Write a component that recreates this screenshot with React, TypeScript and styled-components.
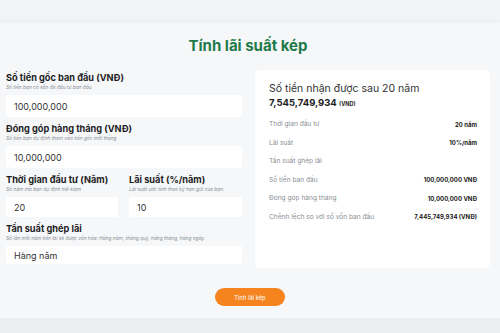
import styled, { createGlobalStyle } from 'styled-components';

const GlobalStyle = createGlobalStyle`
  html, body {
    margin: 0;
    padding: 0;
    background: #eef0f3;
    font-family: 'Inter', 'Noto Sans', sans-serif;
  }
`;

const TopBar = styled.div`
  height: 20px;
  background: #f2f3f6;
  box-shadow: 0 2px 4px rgba(0, 0, 0, 0.05);
  position: relative;
`;

const Main = styled.main`
  background: #f6f7f9;
  height: 298px;
  padding: 0 10px 0 6px;
  box-sizing: border-box;
`;

const Title = styled.h1`
  margin: 0;
  padding-top: 16px;
  height: 50px;
  box-sizing: border-box;
  text-align: center;
  font-size: 15px;
  font-weight: 700;
  color: #1e7a48;
`;

const Columns = styled.div`
  display: grid;
  grid-template-columns: 236px 235px;
  column-gap: 13px;
  align-items: start;
`;

const Form = styled.div`
  display: flex;
  flex-direction: column;
  padding-top: 2px;
`;

const Field = styled.div`
  display: flex;
  flex-direction: column;
  margin-bottom: 6px;
`;

const Label = styled.label`
  font-size: 9.2px;
  font-weight: 700;
  color: #1d1d1f;
  line-height: 12px;
`;

const Hint = styled.span`
  font-size: 4.8px;
  font-style: italic;
  color: #8a8f96;
  line-height: 7px;
  margin-bottom: 4px;
  white-space: nowrap;
`;

const Input = styled.div<{ $h?: number }>`
  height: ${(p) => p.$h ?? 22}px;
  background: #fff;
  border-radius: 2px;
  display: flex;
  align-items: center;
  padding-left: 8px;
  font-size: 9px;
  color: #333;
`;

const Row = styled.div`
  display: grid;
  grid-template-columns: 112px 113px;
  column-gap: 11px;
`;

const Card = styled.section`
  height: 198px;
  background: #fff;
  border-radius: 5px;
  padding: 12px 13px 0 14px;
  box-sizing: border-box;
`;

const CardTitle = styled.div`
  font-size: 10.5px;
  color: #333;
  line-height: 14px;
`;

const Total = styled.div`
  font-size: 9.5px;
  font-weight: 700;
  color: #1d1d1f;
  line-height: 13px;
  margin-bottom: 4px;
  small {
    font-size: 5.5px;
  }
`;

const Item = styled.div`
  display: flex;
  justify-content: space-between;
  align-items: center;
  height: 18.5px;
`;

const ItemLabel = styled.span`
  font-size: 6.6px;
  color: #8a8f96;
`;

const ItemValue = styled.span`
  font-size: 6px;
  font-weight: 700;
  color: #222;
`;

const Actions = styled.div`
  display: flex;
  justify-content: center;
  padding-top: 18px;
  padding-left: 4px;
`;

const Button = styled.button`
  width: 70px;
  height: 18px;
  border: none;
  border-radius: 9px;
  background: #f5841f;
  color: #fff;
  font-family: inherit;
  font-size: 5.8px;
  padding: 0;
`;

const Footer = styled.div`
  height: 15px;
  background: #eceef1;
`;

const results = [
  { label: 'Thời gian đầu tư', value: '20 năm' },
  { label: 'Lãi suất', value: '10%/năm' },
  { label: 'Tần suất ghép lãi', value: '' },
  { label: 'Số tiền ban đầu', value: '100,000,000 VNĐ' },
  { label: 'Đóng góp hàng tháng', value: '10,000,000 VNĐ' },
  { label: 'Chênh lệch so với số vốn ban đầu', value: '7,445,749,934 (VNĐ)' },
];

export default function App() {
  return (
    <>
      <GlobalStyle />
      <TopBar />
      <Main>
        <Title>Tính lãi suất kép</Title>
        <Columns>
          <Form>
            <Field>
              <Label>Số tiền gốc ban đầu (VNĐ)</Label>
              <Hint>Số tiền bạn có sẵn để đầu tư ban đầu</Hint>
              <Input>100,000,000</Input>
            </Field>
            <Field>
              <Label>Đóng góp hàng tháng (VNĐ)</Label>
              <Hint>Số tiền bạn dự định thêm vào tiền gốc mỗi tháng</Hint>
              <Input>10,000,000</Input>
            </Field>
            <Row>
              <Field>
                <Label>Thời gian đầu tư (Năm)</Label>
                <Hint>Số năm mà bạn dự định tiết kiệm</Hint>
                <Input $h={20}>20</Input>
              </Field>
              <Field>
                <Label>Lãi suất (%/năm)</Label>
                <Hint>Lãi suất ước tính theo kỳ hạn gửi của bạn.</Hint>
                <Input $h={20}>10</Input>
              </Field>
            </Row>
            <Field>
              <Label>Tần suất ghép lãi</Label>
              <Hint>Số lần mỗi năm tiền lãi sẽ được vốn hóa: Hàng năm, tháng quý, hàng tháng, hàng ngày.</Hint>
              <Input $h={18}>Hàng năm</Input>
            </Field>
          </Form>
          <Card>
            <CardTitle>Số tiền nhận được sau 20 năm</CardTitle>
            <Total>
              7,545,749,934 <small>(VND)</small>
            </Total>
            {results.map((r) => (
              <Item key={r.label}>
                <ItemLabel>{r.label}</ItemLabel>
                <ItemValue>{r.value}</ItemValue>
              </Item>
            ))}
          </Card>
        </Columns>
        <Actions>
          <Button>Tính lãi kép</Button>
        </Actions>
      </Main>
      <Footer />
    </>
  );
}
